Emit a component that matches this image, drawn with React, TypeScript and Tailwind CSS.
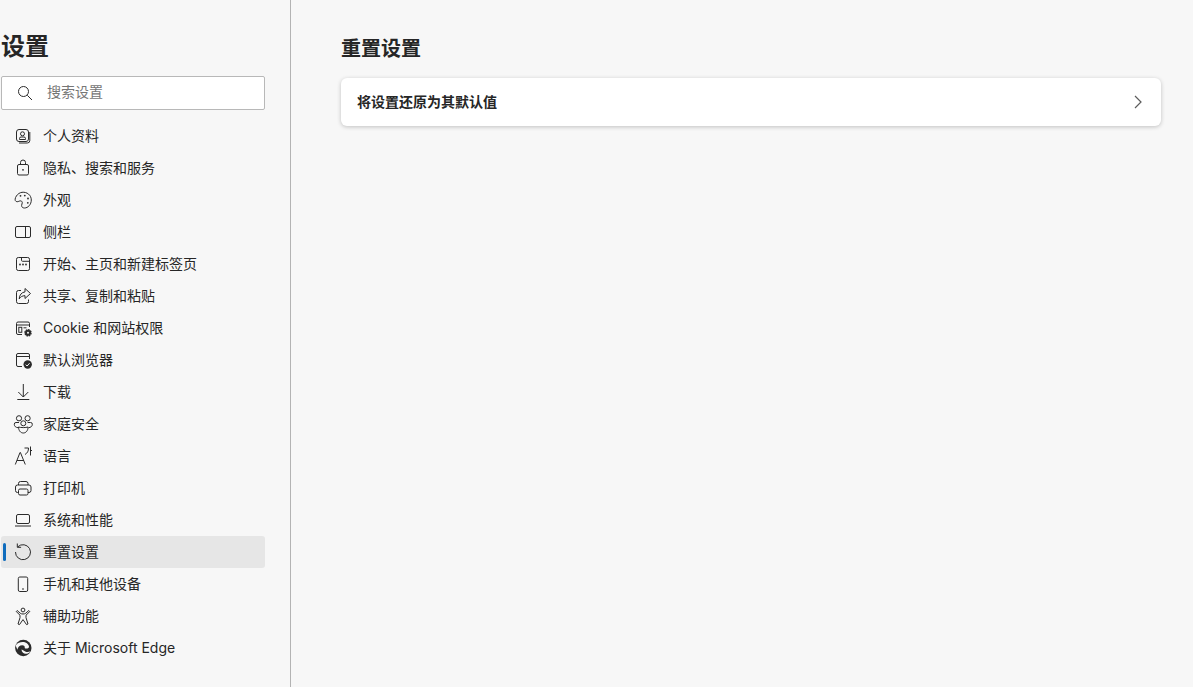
import type { ReactNode } from 'react'

const ink = '#2b2b2b'
const bg = '#f7f7f7'

function Svg({ children }: { children: ReactNode }) {
  return (
    <svg width="20" height="20" viewBox="0 0 20 20" fill="none" stroke={ink} strokeWidth="1" className="shrink-0">
      {children}
    </svg>
  )
}

const navItems: { label: string; icon: ReactNode; active?: boolean }[] = [
  {
    label: '个人资料',
    icon: (
      <Svg>
        <rect x="3.500" y="3.500" width="12" height="12" rx="2.500" />
        <circle cx="9.500" cy="7.800" r="2" />
        <path d="M6.500 13.500v-1a1.500 1.500 0 0 1 1.500-1.500h3a1.500 1.500 0 0 1 1.500 1.500v1z" />
        <path d="M16.800 6v8.500a2.500 2.500 0 0 1-2.500 2.500H6" />
      </Svg>
    ),
  },
  {
    label: '隐私、搜索和服务',
    icon: (
      <Svg>
        <rect x="4.500" y="6.500" width="11" height="10.500" rx="1.500" />
        <path d="M7.500 6.500V4.500a2.500 2.500 0 0 1 5 0v2" />
        <circle cx="10" cy="11.800" r=".9" fill={ink} stroke="none" />
      </Svg>
    ),
  },
  {
    label: '外观',
    icon: (
      <Svg>
        <path d="M9 2.300c5-.6 9.300 2.800 9.300 7.700 0 4.500-3.300 8-6.800 8-1.900 0-2.900-1-2.900-2.500 0-1.200.7-1.800.7-2.800 0-1.300-1-2-2.300-1.800-1.100.2-2.500 1.300-3.800.6C1.500 10.700 2 8 3.400 6 4.700 4 6.800 2.600 9 2.300z" />
        <circle cx="7.500" cy="5.800" r=".9" fill={ink} stroke="none" />
        <circle cx="11.800" cy="5.600" r=".9" fill={ink} stroke="none" />
        <circle cx="15" cy="8.500" r=".9" fill={ink} stroke="none" />
        <circle cx="14.800" cy="12.800" r=".9" fill={ink} stroke="none" />
      </Svg>
    ),
  },
  {
    label: '侧栏',
    icon: (
      <Svg>
        <rect x="2.500" y="4.500" width="15" height="11" rx="1.500" />
        <path d="M12.500 4.500v11" />
      </Svg>
    ),
  },
  {
    label: '开始、主页和新建标签页',
    icon: (
      <Svg>
        <rect x="3.500" y="3.500" width="13" height="13" rx="1.800" />
        <path d="M8.500 3.500v2.800a1 1 0 0 0 1 1h7" />
        <circle cx="7" cy="10.500" r=".9" fill={ink} stroke="none" />
        <circle cx="10" cy="10.500" r=".9" fill={ink} stroke="none" />
        <circle cx="13" cy="10.500" r=".9" fill={ink} stroke="none" />
      </Svg>
    ),
  },
  {
    label: '共享、复制和粘贴',
    icon: (
      <Svg>
        <path d="M8 4.500H5.500a2 2 0 0 0-2 2v9a2 2 0 0 0 2 2h8a2 2 0 0 0 2-2v-2" />
        <path d="M12 2.500l5.500 5-5.500 5v-2.800c-2.600 0-4.400 1-5.800 3.200.2-4 2.400-6.600 5.800-7z" />
      </Svg>
    ),
  },
  {
    label: 'Cookie 和网站权限',
    icon: (
      <Svg>
        <path d="M9 16.500H5A1.500 1.500 0 0 1 3.500 15V5.500A1.500 1.500 0 0 1 5 4h10A1.500 1.500 0 0 1 16.500 5.500V9" />
        <path d="M3.500 7h13" />
        <rect x="5.800" y="9.300" width="3" height="5" />
        <path d="M10.500 9.800h3" />
        <circle cx="15" cy="14.800" r="3" fill={ink} stroke={ink} strokeWidth="1.500" strokeDasharray="1.600 .7" />
        <circle cx="15" cy="14.800" r="1" fill={bg} stroke="none" />
      </Svg>
    ),
  },
  {
    label: '默认浏览器',
    icon: (
      <Svg>
        <path d="M9 16.500H5A1.500 1.500 0 0 1 3.500 15V5A1.500 1.500 0 0 1 5 3.500h10A1.500 1.500 0 0 1 16.500 5v4" />
        <path d="M3.500 6.500h13" />
        <circle cx="14.700" cy="14.500" r="4.200" fill={ink} stroke="none" />
        <path d="M12.700 14.600l1.400 1.400 2.500-2.800" stroke={bg} />
      </Svg>
    ),
  },
  {
    label: '下载',
    icon: (
      <Svg>
        <path d="M10.300 2v13M5.300 10l5 5 5-5M4.300 17.500h12" />
      </Svg>
    ),
  },
  {
    label: '家庭安全',
    icon: (
      <Svg>
        <circle cx="6" cy="4.300" r="2.600" />
        <circle cx="14.600" cy="4.300" r="2.600" />
        <circle cx="10.300" cy="9.300" r="2.500" />
        <path d="M6 8.500H3a1.700 1.700 0 0 0-1.700 1.800c0 2 1.500 3.200 3.700 3.400M14.600 8.500h3a1.700 1.700 0 0 1 1.700 1.800c0 2-1.500 3.200-3.700 3.400" />
        <path d="M5.500 13c.1 3.500 2 6 4.800 6s4.700-2.500 4.800-6c-1.300.4-3 .6-4.800.6s-3.500-.2-4.800-.6z" />
      </Svg>
    ),
  },
  {
    label: '语言',
    icon: (
      <Svg>
        <path d="M2.300 18.500L7 6.500h.4l4.900 12M4 14.500h7" />
        <path d="M11.500 2h4c0 3-1 5-3.500 6.500M17.500 .5v9M17.500 4.500H19" />
      </Svg>
    ),
  },
  {
    label: '打印机',
    icon: (
      <Svg>
        <path d="M5.500 7V5.500a2 2 0 0 1 2-2h5.500a2 2 0 0 1 2 2V7" />
        <path d="M5.500 14.500H4.500a2 2 0 0 1-2-2V9a2 2 0 0 1 2-2h11.500a2 2 0 0 1 2 2v3.500a2 2 0 0 1-2 2H15" />
        <rect x="5.500" y="11" width="9.500" height="6" rx="1.500" />
      </Svg>
    ),
  },
  {
    label: '系统和性能',
    icon: (
      <Svg>
        <rect x="3.500" y="4.500" width="13" height="9" rx="1.500" />
        <path d="M2 16h16" />
      </Svg>
    ),
  },
  {
    label: '重置设置',
    active: true,
    icon: (
      <Svg>
        <path d="M4.800 4.800A7.500 7.500 0 1 1 2.500 10" />
        <path d="M4.300 1.500v3.800h3.800" />
      </Svg>
    ),
  },
  {
    label: '手机和其他设备',
    icon: (
      <Svg>
        <rect x="5.300" y="3" width="9.400" height="14.500" rx="1.500" />
        <path d="M9 15h2" />
      </Svg>
    ),
  },
  {
    label: '辅助功能',
    icon: (
      <Svg>
        <circle cx="10" cy="4" r="1.900" />
        <path d="M3.200 5.500l1-1 3 2.700c.7.500 1.600.8 2.800.8s2.100-.3 2.800-.8l3-2.700 1 1-3.800 3.700v2.500l2 6.300-1.500.6-3.500-5-3.500 5-1.500-.6 2-6.300V9.200z" />
      </Svg>
    ),
  },
  {
    label: '关于 Microsoft Edge',
    icon: (
      <Svg>
        <circle cx="10.300" cy="10" r="8.200" fill={ink} stroke="none" />
        <path d="M2.600 7.500C4.500 4.500 7 4 9.500 4c3.500 0 6 2 6.500 4.500.2 1.500-1.500 2.200-3 2-1-.1-1.300-.5-1.300-.5.500-1.500-.6-2.700-2.500-2.700-2.500 0-4.500 2-4.800 4.500" fill={bg} stroke="none" />
        <path d="M8.500 11.500c0 2.800 2.300 4.600 5 4.200 1.800-.3 3-1.200 4-2.500-1.800 1-3.700 1-5.300.2-1.700-.7-2.800-1.600-3.700-1.900z" fill={bg} stroke="none" />
      </Svg>
    ),
  },
]

function NavRow({ label, icon, active }: { label: string; icon: ReactNode; active?: boolean }) {
  return (
    <a
      className={
        active
          ? 'relative flex h-8 w-[264px] items-center gap-[10px] rounded-[3px] bg-[#e6e6e6] pl-3 text-sm text-[#262626]'
          : 'relative flex h-8 w-[264px] items-center gap-[10px] rounded-[3px] pl-3 text-sm text-[#262626]'
      }
    >
      {active && <span className="absolute left-[2px] top-[7px] h-[18px] w-[3px] rounded-sm bg-[#0f6cbd]" />}
      {icon}
      <span>{label}</span>
    </a>
  )
}

export default function App() {
  return (
    <div
      className="flex h-[687px] w-[1193px] overflow-hidden bg-[#f7f7f7] text-[#262626]"
      style={{ fontFamily: 'Inter, "Noto Sans CJK SC", sans-serif' }}
    >
      {/* sidebar */}
      <aside className="h-full w-[291px] shrink-0 border-r border-[#b3b3b3] pl-px">
        <h1 className="mt-[29px] h-[36px] text-2xl leading-[36px] font-bold">设置</h1>
        <div className="mt-[11px] flex h-[34px] w-[264px] items-center rounded-[2px] border border-[#b8b8b8] bg-white pl-[15px]">
          <svg width="16" height="16" viewBox="0 0 16 16" fill="none" stroke={ink} strokeWidth="1">
            <circle cx="6.500" cy="6.500" r="5" />
            <path d="M10.300 10.300L15 15" />
          </svg>
          <span className="ml-[14px] -translate-y-px text-sm text-[#767676]">搜索设置</span>
        </div>
        <nav className="mt-[10px]">
          {navItems.map((item) => (
            <NavRow key={item.label} {...item} />
          ))}
        </nav>
      </aside>

      {/* main */}
      <main className="flex-1 pl-[50px] pr-[32px]">
        <h2 className="mt-[35px] h-[28px] text-xl leading-[28px] font-bold">重置设置</h2>
        <div className="mt-[15px] flex h-[48px] items-center justify-between rounded-md bg-white pl-4 pr-[18px] shadow-[0_1px_4px_rgba(0,0,0,0.22)]">
          <span className="text-sm font-bold">将设置还原为其默认值</span>
          <svg width="10" height="14" viewBox="0 0 10 14" fill="none" stroke="#5c5c5c" strokeWidth="1.200">
            <path d="M2 1l6 6-6 6" />
          </svg>
        </div>
      </main>
    </div>
  )
}
